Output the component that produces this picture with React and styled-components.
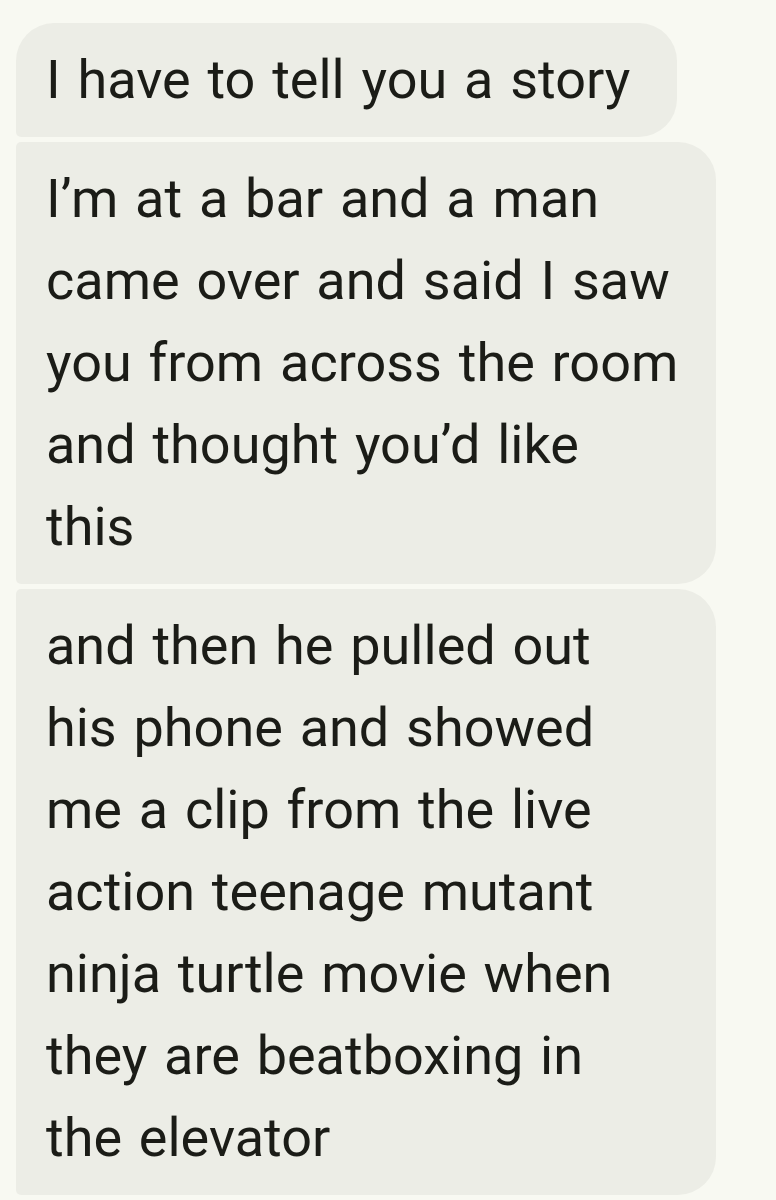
import React from "react";
import styled, { createGlobalStyle } from "styled-components";

const Global = createGlobalStyle`
  html, body { margin: 0; padding: 0; background: #f8f9f2; }
  body { font-family: Roboto, "Noto Sans", sans-serif; }
`;

const Thread = styled.div`
  display: flex;
  flex-direction: column;
  align-items: flex-start;
  gap: 5px;
  padding: 23px 60px 0 16px;
  min-height: 1200px;
  box-sizing: border-box;
`;

const Bubble = styled.div`
  box-sizing: border-box;
  width: ${({ $full }) => ($full ? "700px" : "auto")};
  background: #ecede6;
  color: #1b1c17;
  font-size: 54px;
  line-height: 82px;
  word-spacing: 3.4px;
  padding: 16px ${({ $full }) => ($full ? "37px" : "47px")} 16px 30px;
  border-radius: ${({ $first }) => ($first ? "38px" : "5px")} 38px 38px 5px;
`;

const Line = styled.span`
  display: block;
  white-space: nowrap;
`;

const messages = [
  ["I have to tell you a story"],
  [
    "I\u2019m at a bar and a man",
    "came over and said I saw",
    "you from across the room",
    "and thought you\u2019d like",
    "this",
  ],
  [
    "and then he pulled out",
    "his phone and showed",
    "me a clip from the live",
    "action teenage mutant",
    "ninja turtle movie when",
    "they are beatboxing in",
    "the elevator",
  ],
];

export default function App() {
  return (
    <>
      <Global />
      <Thread>
        {messages.map((lines, i) => (
          <Bubble key={i} $first={i === 0} $full={lines.length > 1}>
            {lines.map((l, j) => (
              <Line key={j}>{l}</Line>
            ))}
          </Bubble>
        ))}
      </Thread>
    </>
  );
}
